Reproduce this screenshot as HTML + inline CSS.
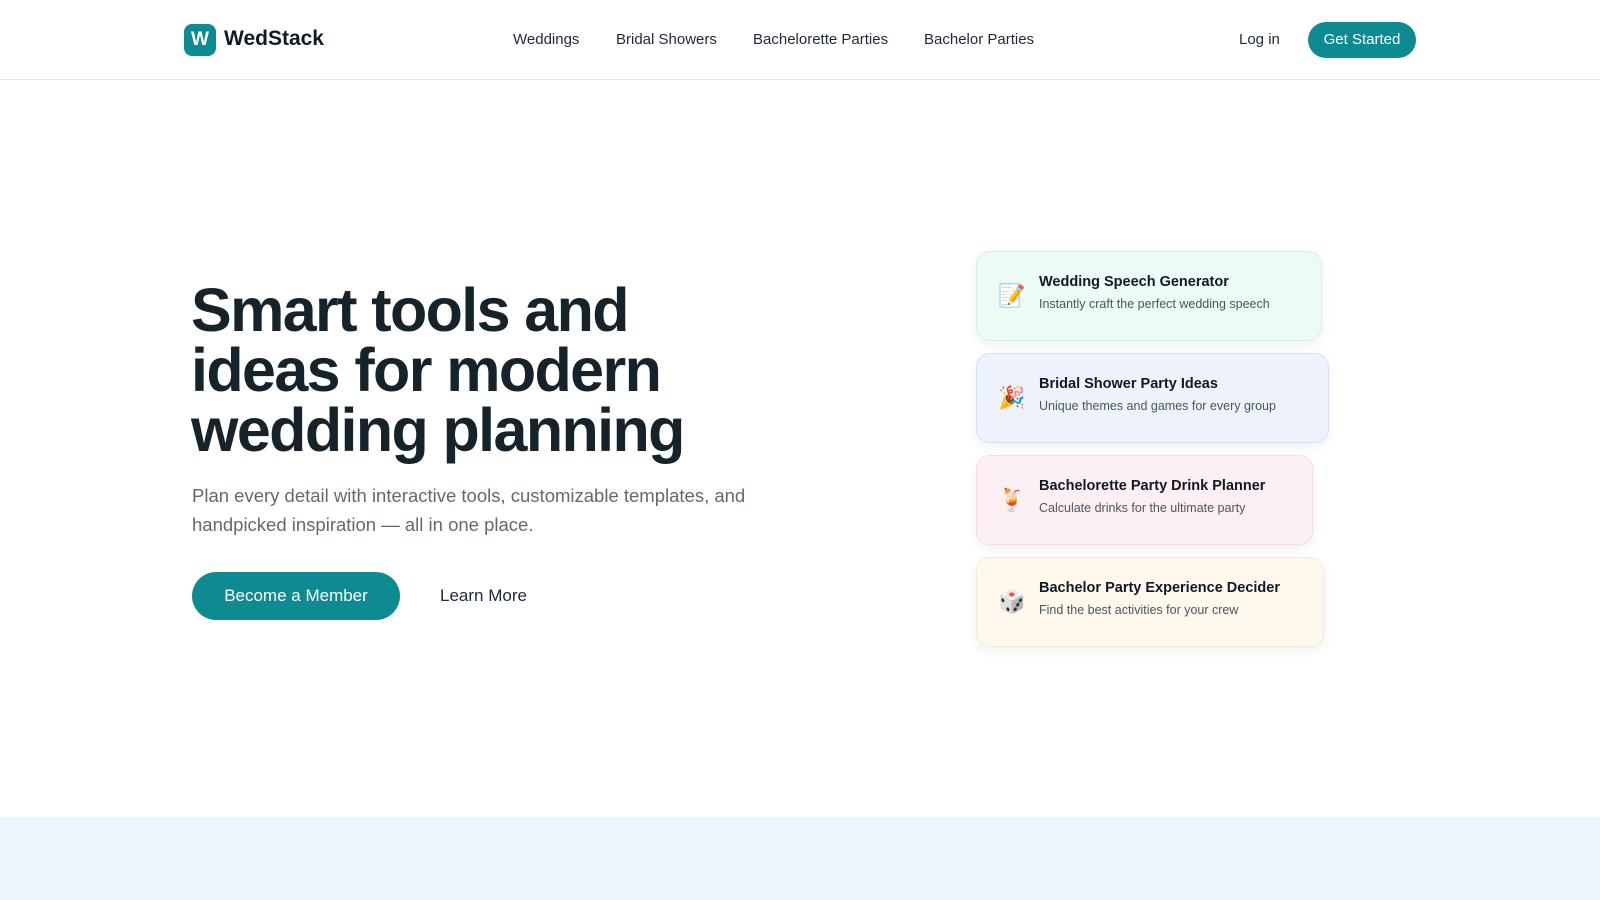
<!DOCTYPE html>
<html><head><meta charset="utf-8"><style>
*{box-sizing:border-box;margin:0;padding:0}
body{width:1600px;height:900px;overflow:hidden;background:#fff;font-family:"Liberation Sans",Arial,sans-serif;color:#15202b;position:relative}
header{position:absolute;left:0;top:0;width:1600px;height:80px;border-bottom:1px solid #e5e7eb}
.logo{position:absolute;left:184px;top:24px;width:32px;height:32px;border-radius:8px;background:#0e8a93;color:#fff;font-weight:bold;font-size:19px;text-align:center;line-height:32px}
.brand{position:absolute;left:224px;top:27px;font-size:21px;font-weight:bold;color:#111827}
.nav a{position:absolute;top:31px;font-size:15px;color:#1f2937;text-decoration:none}
.login{position:absolute;left:1239px;top:31px;font-size:15px;color:#1f2937}
.gs{position:absolute;left:1308px;top:22px;width:108px;height:36px;border-radius:18px;background:#0e8a93;color:#fff;font-size:15px;text-align:center;line-height:36px}
h1{position:absolute;left:191px;top:280px;font-size:61px;line-height:60px;font-weight:bold;letter-spacing:-1.6px;color:#16232a}
.sub{position:absolute;left:192px;top:481px;width:600px;font-size:18.5px;line-height:29px;color:#5f6b70}
.btn{position:absolute;left:192px;top:572px;width:208px;height:48px;border-radius:24px;background:#0e8a93;color:#fff;font-size:17px;text-align:center;line-height:48px}
.lm{position:absolute;left:440px;top:586px;font-size:17px;color:#1f2937}
.card{position:absolute;left:976px;height:90px;border-radius:14px;border:1px solid;box-shadow:0 4px 12px rgba(0,0,0,.06);padding:0 20px 0 62px}
.card .ic{position:absolute;left:21px;top:30px;font-size:22px;line-height:30px;font-family:"Noto Color Emoji","DejaVu Sans",sans-serif}
.card b{display:block;margin-top:22px;font-size:14.5px;color:#111827}
.card span{display:block;margin-top:7px;font-size:12.5px;color:#4b5563}
.bottom{position:absolute;left:0;top:817px;width:1600px;height:83px;background:#eef4fc}
</style></head><body>
<header>
<div class="logo">W</div><div class="brand">WedStack</div>
<div class="nav"><a style="left:513px">Weddings</a><a style="left:616px">Bridal Showers</a><a style="left:753px">Bachelorette Parties</a><a style="left:924px">Bachelor Parties</a></div>
<div class="login">Log in</div><div class="gs">Get Started</div>
</header>
<h1>Smart tools and<br>ideas for modern<br>wedding planning</h1>
<p class="sub">Plan every detail with interactive tools, customizable templates, and handpicked inspiration — all in one place.</p>
<div class="btn">Become a Member</div><div class="lm">Learn More</div>
<div class="card" style="top:251px;width:346px;background:#ecfbf3;border-color:#d3f1e1"><div class="ic">📝</div><b>Wedding Speech Generator</b><span>Instantly craft the perfect wedding speech</span></div>
<div class="card" style="top:353px;width:353px;background:#edf2fd;border-color:#d6e0f5"><div class="ic">🎉</div><b>Bridal Shower Party Ideas</b><span>Unique themes and games for every group</span></div>
<div class="card" style="top:455px;width:337px;background:#fdf0f3;border-color:#f5dbe2"><div class="ic">🍹</div><b>Bachelorette Party Drink Planner</b><span>Calculate drinks for the ultimate party</span></div>
<div class="card" style="top:557px;width:348px;background:#fef9ec;border-color:#f4ead0"><div class="ic">🎲</div><b>Bachelor Party Experience Decider</b><span>Find the best activities for your crew</span></div>
<div class="bottom"></div>
</body></html>
